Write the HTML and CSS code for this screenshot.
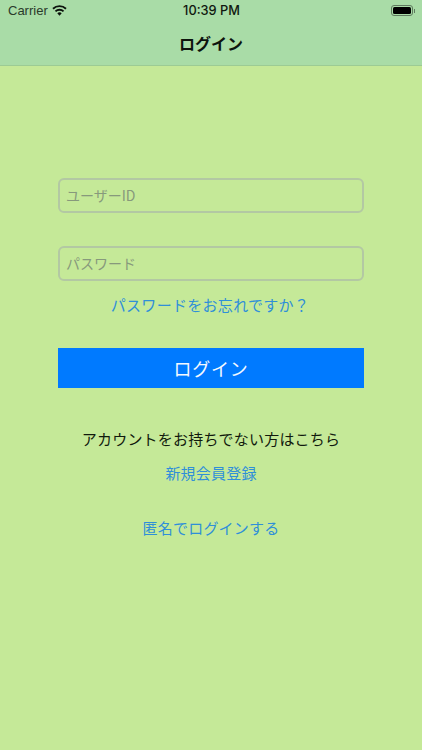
FILE: index.html
```html
<!DOCTYPE html>
<html lang="ja">
<head>
<meta charset="utf-8">
<title>ログイン</title>
<link rel="stylesheet" href="styles.css">
</head>
<body>
<div class="app">
  <header class="top">
    <div class="status">
      <div class="status-left">
        <span>Carrier</span>
        <svg class="wifi" viewBox="0 0 16 12" width="15" height="11"><path d="M8 11.6 5.6 9a3.4 3.4 0 0 1 4.8 0zM4.3 7.7 2.9 6.2a7.3 7.3 0 0 1 10.2 0l-1.4 1.5a5.3 5.3 0 0 0-7.4 0zM1.6 4.9.2 3.4a11.2 11.2 0 0 1 15.6 0l-1.4 1.5a9.2 9.2 0 0 0-12.8 0z"/></svg>
      </div>
      <div class="clock">10:39 PM</div>
      <div class="status-right">
        <div class="battery"><div class="battery-fill"></div></div>
        <div class="battery-cap"></div>
      </div>
    </div>
    <div class="title">ログイン</div>
  </header>
  <main class="form">
    <div class="field">ユーザーID</div>
    <div class="field second">パスワード</div>
    <a class="link forgot">パスワードをお忘れですか？</a>
    <div class="login">ログイン</div>
    <p class="note">アカウントをお持ちでない方はこちら</p>
    <a class="link signup">新規会員登録</a>
    <a class="link anon">匿名でログインする</a>
  </main>
</div>
</body>
</html>
```
FILE: styles.css
```css
* { box-sizing: border-box; }
html, body { margin: 0; padding: 0; }
body {
  width: 422px;
  height: 750px;
  overflow: hidden;
  background: #c5e998;
  font-family: "Noto Sans CJK JP", "Liberation Sans", sans-serif;
}
.app { display: flex; flex-direction: column; height: 750px; }
.top {
  height: 66px;
  background: #a9dca7;
  border-bottom: 1px solid #9ccb94;
  display: flex;
  flex-direction: column;
}
.status {
  height: 21px;
  padding: 0 7px 0 8px;
  display: grid;
  grid-template-columns: 1fr auto 1fr;
  align-items: center;
  color: #10180f;
}
.status-left {
  display: flex;
  align-items: center;
  gap: 5px;
  font: 13px "Liberation Sans", sans-serif;
  color: #2b3a2b;
}
.wifi { fill: #0c130c; margin-left: -1px; }
.clock { font: 500 12.8px "Inter", "Liberation Sans", sans-serif; }
.status-right { display: flex; align-items: center; justify-content: flex-end; gap: 1px; }
.battery {
  width: 22px;
  height: 11px;
  border: 1px solid #5f7a5f;
  border-radius: 3px;
  padding: 1px;
}
.battery-fill { height: 100%; background: #000; border-radius: 1.5px; }
.battery-cap { width: 1px; height: 4px; background: #5f7a5f; }
.title {
  text-align: center;
  font-size: 16px;
  font-weight: 700;
  line-height: 24px;
  margin-top: 10px;
  color: #0d130d;
}
.form {
  display: flex;
  flex-direction: column;
  align-items: center;
  padding-top: 112px;
}
.field {
  width: 306px;
  height: 35px;
  border: 2px solid #b3c8a3;
  border-radius: 6px;
  padding-left: 6px;
  font-size: 14px;
  line-height: 31px;
  color: #87997c;
}
.second { margin-top: 33px; }
.link { color: #2f8fd8; font-size: 15px; line-height: 22px; display: block; }
.forgot { margin-top: 13px; letter-spacing: 0.3px; transform: translateX(-1px); }
.login {
  margin-top: 32px;
  width: 306px;
  height: 40px;
  background: #007aff;
  color: #f4f9ff;
  text-align: center;
  font-size: 18px;
  letter-spacing: 0.8px;
  line-height: 40px;
}
.note { margin: 40px 0 0; font-size: 15px; letter-spacing: 0.2px; line-height: 22px; color: #111a0d; }
.signup { margin-top: 12px; letter-spacing: 0.2px; }
.anon { margin-top: 33px; letter-spacing: 0.2px; }
```
